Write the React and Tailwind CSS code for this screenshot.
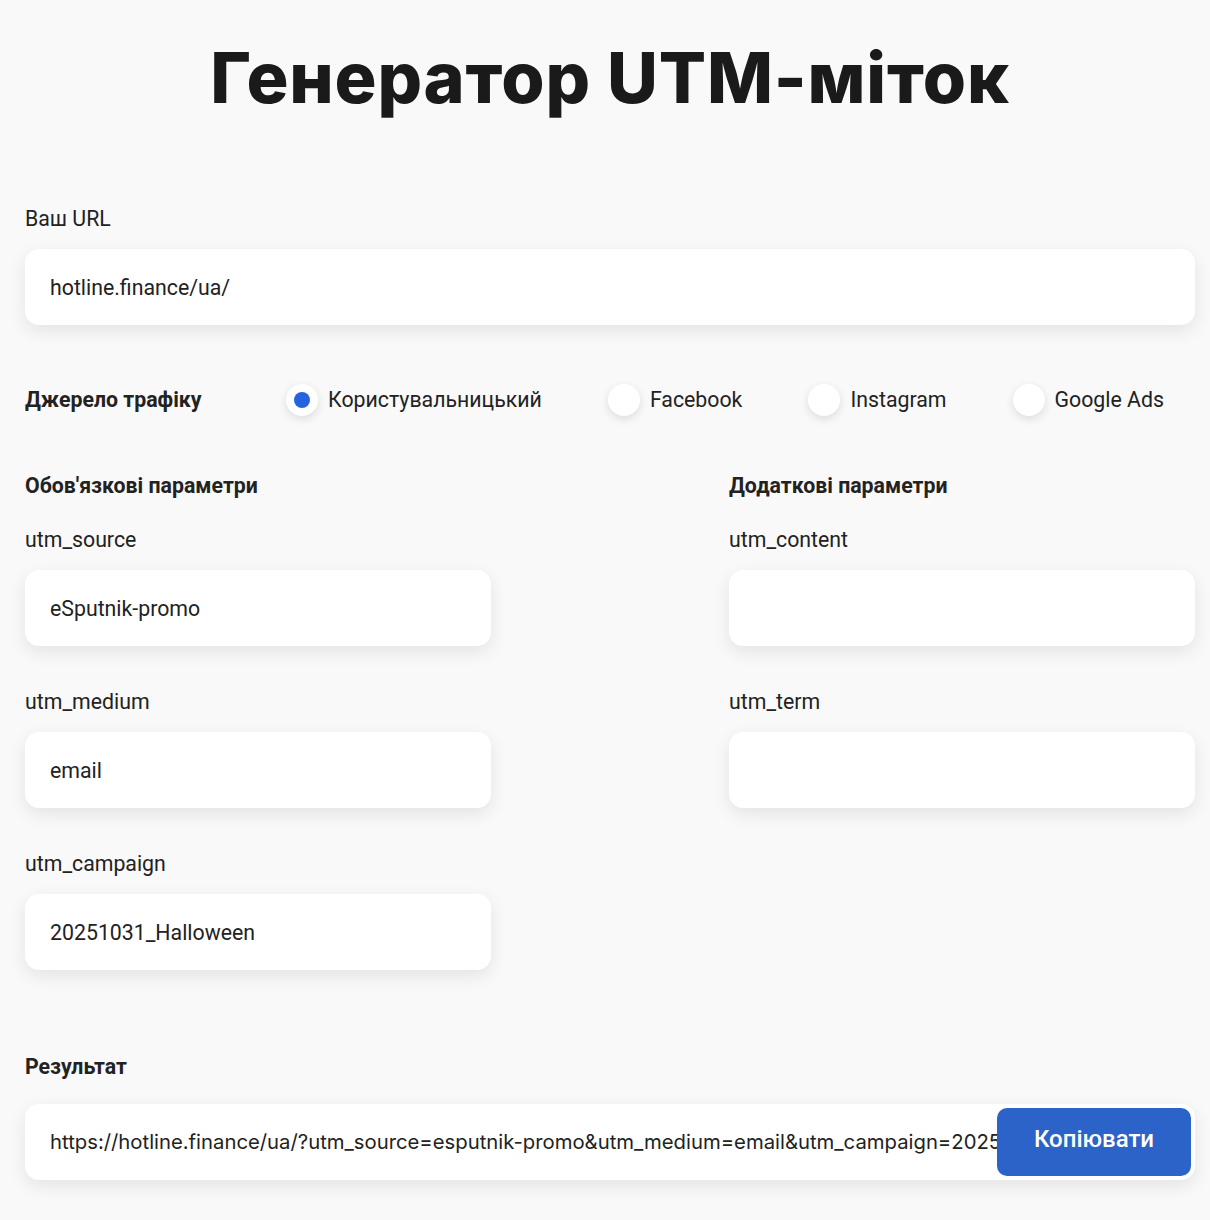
import React from "react";

const field = "h-[76px] w-full rounded-[14px] bg-white shadow-[0_6px_18px_rgba(0,0,0,0.09)] flex items-center px-[25px] pt-[2px] text-[21.3px] text-[#222]";

function Field({ label, value }) {
  return (
    <div className="flex flex-col">
      <div className="text-[21.3px] leading-[24px] text-[#222]">{label}</div>
      <div className={field + " mt-[18px]"}>{value}</div>
    </div>
  );
}

function Radio({ label, checked }) {
  return (
    <div className="flex items-center gap-[10px]">
      <div className="w-[32px] h-[32px] rounded-full bg-white shadow-[0_3px_10px_rgba(0,0,0,0.12)] flex items-center justify-center">
        {checked && <div className="w-[16px] h-[16px] rounded-full bg-[#2563e0]" />}
      </div>
      <span className="text-[21.3px] leading-[24px] text-[#222]">{label}</span>
    </div>
  );
}

export default function App() {
  return (
    <div className="min-h-[1220px] bg-[#f9f9f9] pl-[25px] pr-[15px] pb-[40px]" style={{ fontFamily: "Roboto, 'Noto Sans', sans-serif" }}>
      <h1
        className="pt-[30px] text-center text-[70px] leading-[96px] font-extrabold text-[#1a1a1a] tracking-[0.8px]"
        style={{ fontFamily: "Inter, 'Noto Sans', sans-serif" }}
      >
        Генератор UTM-міток
      </h1>

      <div className="mt-[81px]">
        <Field label="Ваш URL" value="hotline.finance/ua/" />
      </div>

      <div className="mt-[59px] flex items-center h-[32px]">
        <div className="w-[261px] text-[21.3px] leading-[24px] font-bold text-[#222]">Джерело трафіку</div>
        <div className="flex items-center gap-[66px]">
          <Radio label="Користувальницький" checked />
          <Radio label="Facebook" />
          <Radio label="Instagram" />
          <Radio label="Google Ads" />
        </div>
      </div>

      <div className="mt-[58px] grid grid-cols-[466px_466px] justify-between">
        <div className="flex flex-col">
          <div className="text-[21.3px] leading-[24px] font-bold text-[#222]">Обов'язкові параметри</div>
          <div className="mt-[30px] flex flex-col gap-[44px]">
            <Field label="utm_source" value="eSputnik-promo" />
            <Field label="utm_medium" value="email" />
            <Field label="utm_campaign" value="20251031_Halloween" />
          </div>
        </div>
        <div className="flex flex-col">
          <div className="text-[21.3px] leading-[24px] font-bold text-[#222]">Додаткові параметри</div>
          <div className="mt-[30px] flex flex-col gap-[44px]">
            <Field label="utm_content" value="" />
            <Field label="utm_term" value="" />
          </div>
        </div>
      </div>

      <div className="mt-[85px] text-[21.3px] leading-[24px] font-bold text-[#222]">Результат</div>
      <div className="mt-[25px] relative h-[76px] w-full rounded-[14px] bg-white shadow-[0_6px_18px_rgba(0,0,0,0.09)] overflow-hidden">
        <div
          className="h-full flex items-center pl-[25px] pr-[200px] text-[20.3px] text-[#222] whitespace-nowrap overflow-hidden"
          style={{ fontFamily: "Inter, 'Noto Sans', sans-serif" }}
        >
          https://hotline.finance/ua/?utm_source=esputnik-promo&amp;utm_medium=email&amp;utm_campaign=20251031_halloween
        </div>
        <button className="absolute right-[4px] top-[4px] h-[68px] w-[194px] rounded-[10px] bg-[#2b63c9] text-white text-[24px] font-medium pb-[7px]" style={{ fontFamily: "Roboto, sans-serif" }}>
          Копіювати
        </button>
      </div>
    </div>
  );
}
